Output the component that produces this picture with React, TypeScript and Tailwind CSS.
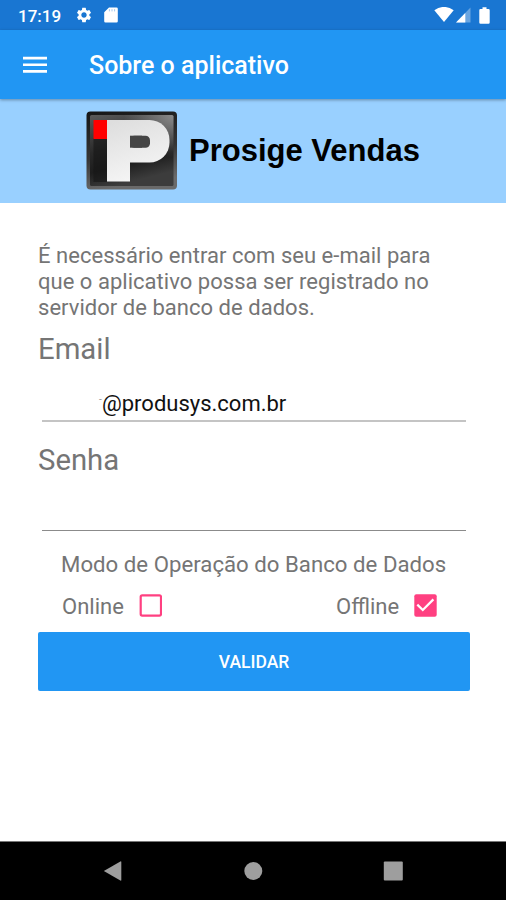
import { useState } from "react";
import { MdSettings } from "react-icons/md";

const StatusBar: React.FC = () => (
  <div className="flex h-[30px] items-center bg-[#1976d2] pr-4 pl-[18px] text-white">
    <span className="w-[57px] pt-[2px] text-[17px] leading-[28px] font-medium whitespace-nowrap">17:19</span>
    <MdSettings className="size-[18px]" />
    <svg className="ml-[11px] h-4 w-[14px]" viewBox="0 0 14 16" fill="currentColor">
      <path d="M5 0.5h7.5A1.3 1.3 0 0 1 13.8 1.8v12.4a1.3 1.3 0 0 1-1.3 1.3h-11A1.3 1.3 0 0 1 0.2 14.2V5.3z" />
      <path d="M5.4 2.2v2.2M8 2.2v2.2M10.6 2.2v2.2" stroke="#1976d2" strokeWidth="0.8" strokeOpacity="0.5" />
    </svg>
    <div className="ml-auto flex items-center">
      <svg className="h-4 w-5" viewBox="0 0 20 16" fill="currentColor">
        <path d="M0.3 3.2Q10-3.4 19.7 3.2L10 15z" />
      </svg>
      <svg className="ml-[2px] h-4 w-[15px]" viewBox="0 0 15 16" fill="currentColor">
        <path d="M14.5 0.5V15.5H0z" fillOpacity="0.35" />
        <path d="M9.3 6V15.5H0z" />
      </svg>
      <svg className="ml-[8px] h-[17px] w-[11px]" viewBox="0 0 11 17" fill="currentColor">
        <path d="M3.5 0.3h4v1.7h2a1.2 1.2 0 0 1 1.2 1.2v12.3a1.2 1.2 0 0 1-1.2 1.2h-8a1.2 1.2 0 0 1-1.2-1.2V3.2A1.2 1.2 0 0 1 1.5 2h2z" />
      </svg>
    </div>
  </div>
);

const Logo: React.FC = () => (
  <svg className="h-[80px] w-[92px]" viewBox="0 0 92 80">
    <defs>
      <linearGradient id="plate" x1="0" y1="0" x2="0.3" y2="1">
        <stop offset="0" stopColor="#5a5a5a" />
        <stop offset="0.5" stopColor="#292929" />
        <stop offset="0.75" stopColor="#1d1d1d" />
        <stop offset="1" stopColor="#3c3c3c" />
      </linearGradient>
      <linearGradient id="frame" x1="0" y1="0" x2="0.2" y2="1">
        <stop offset="0" stopColor="#161616" />
        <stop offset="0.6" stopColor="#363636" />
        <stop offset="1" stopColor="#6a6a6a" />
      </linearGradient>
      <linearGradient id="shine" gradientUnits="userSpaceOnUse" x1="30" y1="10" x2="50" y2="72">
        <stop offset="0" stopColor="#dedede" />
        <stop offset="1" stopColor="#f6f6f6" />
      </linearGradient>
      <radialGradient id="glow" cx="1" cy="0" r="0.6">
        <stop offset="0" stopColor="#8a8a8a" />
        <stop offset="1" stopColor="#8a8a8a" stopOpacity="0" />
      </radialGradient>
    </defs>
    <rect x="0.5" y="0.5" width="90.5" height="78" rx="4" fill="url(#frame)" />
    <rect x="4" y="4" width="83.5" height="71" rx="1.5" fill="url(#plate)" />
    <rect x="4" y="4" width="83.5" height="71" rx="1.5" fill="url(#glow)" />
    <rect x="7.5" y="27" width="13.5" height="44" fill="#151515" fillOpacity="0.6" />
    <rect x="7.5" y="9" width="13.5" height="19" fill="#ff0000" />
    <rect x="21" y="9" width="23" height="61.5" fill="url(#shine)" />
    <rect x="24" y="9" width="59.5" height="42.5" rx="20" fill="url(#shine)" />
    <rect x="44" y="24.7" width="20" height="12" rx="4.5" fill="#454545" />
    <rect x="44" y="24.7" width="12" height="12" fill="#454545" />
  </svg>
);

interface CheckProps {
  checked: boolean;
  onClick: () => void;
}

const Check: React.FC<CheckProps> = ({ checked, onClick }) => (
  <button type="button" role="checkbox" aria-checked={checked} onClick={onClick} className="size-[23px]">
    <svg className="size-[23px]" viewBox="0 0 23 23" fill="none">
      {checked ? (
        <>
          <rect x="0.3" y="0.3" width="22.4" height="22.4" rx="2" fill="#ff4081" />
          <path d="M3.3 10.6L8.8 16L19.4 5.4" stroke="#fff" strokeWidth="2.2" />
        </>
      ) : (
        <rect x="1.7" y="1.3" width="20.3" height="20.3" rx="1.5" stroke="#ff4081" strokeWidth="2.2" />
      )}
    </svg>
  </button>
);

const App: React.FC = () => {
  const [offline, setOffline] = useState<boolean>(true);

  return (
    <div className="flex h-[900px] w-[506px] flex-col overflow-hidden bg-white font-[Roboto,sans-serif] text-[#757575]">
      <StatusBar />
      <header className="z-10 flex h-[69px] items-center bg-[#2196f3] pl-[23px] text-white shadow-[0_1px_3px_rgba(0,0,0,0.35)]">
        <svg className="h-[18px] w-6" viewBox="0 0 24 18" fill="currentColor">
          <path d="M0 0.8h24v2.6H0zM0 7.4h24v2.6H0zM0 14.1h24v2.6H0z" />
        </svg>
        <h1 className="ml-[42px] pt-[3px] text-[25px] leading-[30px] font-medium whitespace-nowrap">Sobre o aplicativo</h1>
      </header>
      <div className="flex h-[104px] bg-[#99d0ff] pt-[12px] pl-[86px]">
        <Logo />
        <span className="ml-[11px] pt-[22px] font-['Liberation_Sans',sans-serif] text-[31px] leading-[36px] font-bold whitespace-nowrap text-black">
          Prosige Vendas
        </span>
      </div>

      <main className="flex flex-1 flex-col pr-9 pl-[38px]">
        <p className="mt-[40px] text-[22px] leading-[25.8px] tracking-[0.03px] whitespace-nowrap">
          É necessário entrar com seu e-mail para
          <br />
          que o aplicativo possa ser registrado no
          <br />
          servidor de banco de dados.
        </p>
        <label className="mt-[10.6px] text-[29.3px] leading-[36px]">Email</label>
        <div className="mx-1 mt-[24px] flex h-[31px] border-b-2 border-[#c4c4c4] pl-[57px] text-[22px] leading-[26px] text-[#111]">
          <span className="w-[3px] text-[10px] leading-[18px] text-[#999]">-</span>
          <span>@produsys.com.br</span>
        </div>
        <label className="mt-[20px] text-[29.3px] leading-[36px]">Senha</label>
        <div className="mx-1 h-[53px] border-b border-[#8b8b8b]" />
        <p className="mt-[20px] pl-[23px] text-[22.2px] leading-[26px] tracking-[0.02px] whitespace-nowrap">
          Modo de Operação do Banco de Dados
        </p>
        <div className="mt-[16px] flex h-[26px] items-center pl-[24px] text-[22px] leading-[26px]">
          <span className="w-[77px] pt-[2px]">Online</span>
          <Check checked={!offline} onClick={() => setOffline(false)} />
          <span className="ml-[174px] w-[78px] pt-[2px]">Offline</span>
          <Check checked={offline} onClick={() => setOffline(true)} />
        </div>
        <button type="button" className="mt-[13.4px] h-[59px] rounded-[2px] bg-[#2196f3] text-[17.5px] font-medium text-white">
          VALIDAR
        </button>
      </main>

      <nav className="flex h-[59px] items-center border-t border-[#777] bg-black pl-[103px] text-[#9e9e9e]">
        <svg className="h-[22px] w-[300px]" viewBox="0 0 300 22" fill="currentColor">
          <path d="M0.8 11L17.4 1.4Q18.3 1 18.3 2V20Q18.3 21 17.4 20.6Z" />
          <circle cx="150.3" cy="11" r="9" />
          <rect x="280.8" y="1.6" width="19" height="19" rx="1" />
        </svg>
      </nav>
    </div>
  );
};

export default App;
